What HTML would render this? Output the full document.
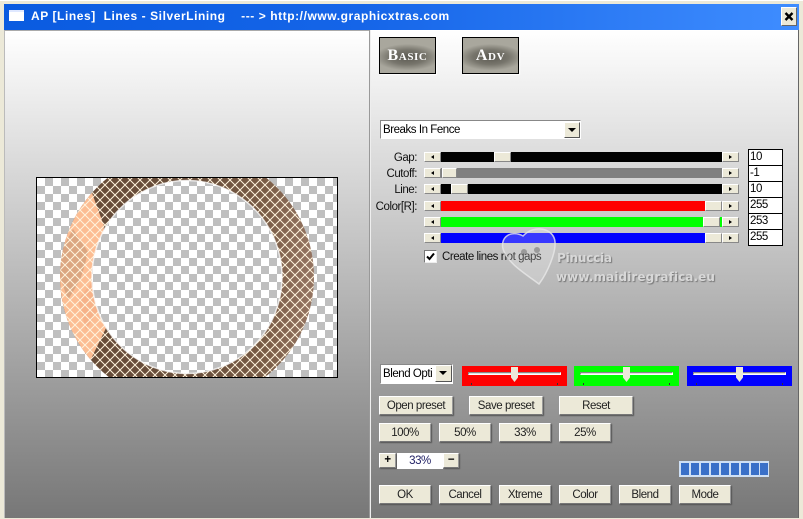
<!DOCTYPE html>
<html><head><meta charset="utf-8">
<style>
html,body{margin:0;padding:0;width:803px;height:519px;overflow:hidden;background:#ece9d8}
body{position:relative;font:11.5px "Liberation Sans",sans-serif;letter-spacing:-.45px;color:#000}
.a{position:absolute;box-sizing:border-box}
.panel{background:linear-gradient(#fff 0,#777 100%);top:30px;height:488px}
.btn{position:absolute;box-sizing:border-box;background:#ece9d8;border:1px solid;border-color:#fff #999 #777 #fff;box-shadow:1px 1px 1px #555;text-align:center;font-size:11.5px;line-height:19px;height:19px;color:#222}
.lab{position:absolute;right:386px;font-size:11.5px;line-height:13px;white-space:pre;color:#111}
.ar{position:absolute;box-sizing:border-box;width:17px;height:10px;background:#ece9d8;border:1px solid;border-color:#fff #888 #888 #fff}
.ar i{position:absolute;left:6px;top:2px;width:0;height:0;border:2px solid transparent}
.ar.l i{border-right:3px solid #000;border-left:0}
.ar.r i{border-left:3px solid #000;border-right:0}
.tr{position:absolute;height:10px;left:441px;width:281px}
.th{position:absolute;width:17px;height:10px;box-sizing:border-box;background:#ece9d8;border:1px solid;border-color:#fff #888 #888 #fff}
.val{position:absolute;left:748px;width:35px;height:17px;box-sizing:border-box;background:#fff;border:1px solid #000;font-size:11.5px;line-height:14px;padding-left:1px}
.big{position:absolute;box-sizing:border-box;top:37px;width:57px;height:37px;border:1px solid #000;background:radial-gradient(ellipse 60% 38% at 50% 55%,#5c5a52 0,#77756c 55%,#a9a79d 100%);color:#fff;font:bold 16px "Liberation Serif",serif;font-variant:small-caps;text-align:center;line-height:35px;letter-spacing:.6px;box-shadow:1px 1px 1px #fff}
.sl{position:absolute;top:366px;height:20px;width:105px}
.sl b{position:absolute;left:6px;right:6px;top:6px;background:#ddd;border:1px solid;border-color:#888 #fff #fff #888;box-sizing:content-box;height:1px}
.sl u{position:absolute;top:1px;width:7px;height:15px;background:#ece9d8;clip-path:polygon(0 0,100% 0,100% 70%,50% 100%,0 70%)}
.sl s{position:absolute;top:17px;width:1px;height:2px;background:#333}
.seg{position:absolute;top:463px;width:8px;height:12px;background:#3a70c8}
</style></head><body>

<div class="a" style="left:0;top:0;width:803px;height:519px;background:#ece9d8;border-top:1px solid #fff"></div>
<div class="a" style="left:4px;top:4px;width:795px;height:26px;background:linear-gradient(90deg,#0a5be0 0,#1565e8 45%,#3f8dff 100%)"></div>
<div class="a" style="left:9px;top:10px;width:15px;height:11px;background:#fff;border-top:2px solid #dfe8ff"></div>
<div class="a" style="left:31px;top:8px;font-weight:bold;font-size:12px;line-height:16px;color:#fff;white-space:pre;letter-spacing:.565px">AP [Lines]  Lines - SilverLining    --- &gt; http://www.graphicxtras.com</div>
<div class="a" style="left:781px;top:7px;width:16px;height:19px;background:#ece9d8;border:1px solid;border-color:#fff #666 #666 #fff"><svg width="14" height="17" style="display:block"><path d="M3.5 5L10.5 12M10.5 5L3.5 12" stroke="#000" stroke-width="2.4"/></svg></div>

<div class="a panel" style="left:4px;width:365px;border-top:1px solid #aaa;border-left:1px solid #bbb"></div>
<div class="a" style="left:369px;top:30px;width:1px;height:488px;background:#999"></div>
<div class="a" style="left:370px;top:30px;width:1px;height:488px;background:#eee"></div>
<div class="a panel" style="left:371px;width:427px"></div>
<div class="a" style="left:798px;top:30px;width:1px;height:488px;background:#666"></div>

<svg class="a" style="left:36px;top:177px" width="302" height="201" viewBox="36 177 302 201">
<defs>
<pattern id="ck" x="37" y="178" width="16" height="16" patternUnits="userSpaceOnUse">
<rect width="16" height="16" fill="#fff"/><rect x="8" width="8" height="8" fill="#bfbfbf"/><rect y="8" width="8" height="8" fill="#bfbfbf"/>
</pattern>
<pattern id="lt" x="0" y="0" width="10" height="10" patternUnits="userSpaceOnUse">
<path d="M0 0L10 10M10 0L0 10" stroke="#fff3dc" stroke-width="1" fill="none"/>
</pattern>
<linearGradient id="br" x1="60" y1="0" x2="314" y2="0" gradientUnits="userSpaceOnUse">
<stop offset="0" stop-color="#654a37"/><stop offset=".55" stop-color="#6a4f3c"/><stop offset=".8" stop-color="#785b45"/><stop offset="1" stop-color="#957562"/>
</linearGradient>
<clipPath id="ring"><path clip-rule="evenodd" d="M60 277a127 127 0 1 0 254 0a127 127 0 1 0 -254 0ZM92 277a95 96.5 0 1 1 190 0a95 96.5 0 1 1 -190 0Z"/></clipPath>
<clipPath id="img"><rect x="37" y="178" width="300" height="199"/></clipPath>
</defs>
<rect x="36.5" y="177.5" width="301" height="200" fill="url(#ck)" stroke="#000"/>
<g clip-path="url(#img)">
<g clip-path="url(#ring)">
<rect x="50" y="140" width="280" height="270" fill="url(#br)"/>
<polygon points="40,175 92,193 104,226 100,277 106,328 91,359 40,380" fill="#fcbd93"/>
<polygon points="55,262 73,229 88,252 84,268 80,280 68,300" fill="#c99a78" opacity=".65"/>
<polygon points="78,300 92,282 98,310 86,330" fill="#f0a880" opacity=".5"/>
<rect x="50" y="140" width="280" height="270" fill="url(#lt)"/>
</g>
<path d="M92 277a95 96.5 0 1 1 190 0a95 96.5 0 1 1 -190 0Z" fill="none" stroke="#fff" stroke-width="1.5" opacity=".75"/>
</g>
</svg>

<div class="big" style="left:379px">Basic</div>
<div class="big" style="left:462px">Adv</div>

<!-- dropdown -->
<div class="a" style="left:380px;top:120px;width:201px;height:19px;background:#fff;border:1px solid;border-color:#888 #fff #fff #888;line-height:19px;padding-left:2px">Breaks In Fence</div>
<div class="a" style="left:564px;top:122px;width:16px;height:16px;background:#ece9d8;border:1px solid;border-color:#fff #555 #555 #fff"><i style="position:absolute;left:3px;top:5px;border:4px solid transparent;border-top:4px solid #000;border-bottom:0"></i></div>

<!-- sliders -->
<div class="lab" style="top:152px">Gap:</div>
<div class="lab" style="top:168px">Cutoff:</div>
<div class="lab" style="top:184px">Line:</div>
<div class="lab" style="top:201px">Color[R]:</div>

<div class="ar l" style="left:424px;top:152px"><i></i></div><div class="tr" style="top:152px;background:#000"></div><div class="th" style="left:494px;top:152px"></div><div class="ar r" style="left:722px;top:152px"><i></i></div>
<div class="ar l" style="left:424px;top:168px"><i></i></div><div class="tr" style="top:168px;background:#808080"></div><div class="th" style="left:442px;top:168px;width:15px"></div><div class="ar r" style="left:722px;top:168px"><i></i></div>
<div class="ar l" style="left:424px;top:184px"><i></i></div><div class="tr" style="top:184px;background:#000"></div><div class="th" style="left:451px;top:184px"></div><div class="ar r" style="left:722px;top:184px"><i></i></div>
<div class="ar l" style="left:424px;top:201px"><i></i></div><div class="tr" style="top:201px;background:#f00"></div><div class="th" style="left:705px;top:201px"></div><div class="ar r" style="left:722px;top:201px"><i></i></div>
<div class="ar l" style="left:424px;top:217px"><i></i></div><div class="tr" style="top:217px;background:#0f0"></div><div class="th" style="left:703px;top:217px"></div><div class="ar r" style="left:722px;top:217px"><i></i></div>
<div class="ar l" style="left:424px;top:233px"><i></i></div><div class="tr" style="top:233px;background:#00f"></div><div class="th" style="left:705px;top:233px"></div><div class="ar r" style="left:722px;top:233px"><i></i></div>

<div class="val" style="top:149px">10</div>
<div class="val" style="top:165px">-1</div>
<div class="val" style="top:181px">10</div>
<div class="val" style="top:197px">255</div>
<div class="val" style="top:213px">253</div>
<div class="val" style="top:229px">255</div>

<div class="a" style="left:424px;top:250px;width:13px;height:13px;background:#fff;border:1px solid;border-color:#777 #eee #eee #777"><svg width="11" height="11" style="display:block"><path d="M2 5.5L4.5 8L9 2.5" fill="none" stroke="#000" stroke-width="2"/></svg></div>
<div class="a" style="left:442px;top:250px;line-height:15px;white-space:pre;color:#111">Create lines not gaps</div>

<!-- watermark -->
<svg class="a" style="left:498px;top:222px" width="62" height="66" viewBox="0 0 62 66">
<path d="M5 27C2 14 14 8 25 14C36 2 56 6 57 20C58 30 50 50 41 62C28 52 10 42 5 27Z" fill="#fff" fill-opacity=".22" stroke="#e8e8e8" stroke-opacity=".8" stroke-width="1.5"/>
<circle cx="26" cy="30" r="3" fill="#666" opacity=".5"/><circle cx="39" cy="28" r="3" fill="#666" opacity=".5"/>
</svg>
<div class="a" style="left:557px;top:251px;font:bold 12px/15px 'DejaVu Sans',sans-serif;letter-spacing:-.2px;color:#d8d8d8;text-shadow:1px 1px 1px #777;white-space:pre">Pinuccia</div>
<div class="a" style="left:556px;top:270px;font:bold 12px/15px 'DejaVu Sans',sans-serif;letter-spacing:.1px;color:#d8d8d8;text-shadow:1px 1px 1px #777;white-space:pre">www.maidiregrafica.eu</div>

<!-- blend -->
<div class="a" style="left:380px;top:364px;width:73px;height:20px;background:#fff;border:1px solid;border-color:#888 #fff #fff #888;line-height:19px;padding-left:2px;overflow:hidden;white-space:nowrap">Blend Opti</div>
<div class="a" style="left:435px;top:365px;width:17px;height:17px;background:#ece9d8;border:1px solid;border-color:#fff #555 #555 #fff"><i style="position:absolute;left:3px;top:5px;border:4px solid transparent;border-top:4px solid #000;border-bottom:0"></i></div>

<div class="sl" style="left:462px;background:#f00"><b></b><u style="left:49px"></u><s style="left:9px"></s><s style="left:95px"></s></div>
<div class="sl" style="left:574px;background:#0f0"><b></b><u style="left:49px"></u><s style="left:9px"></s><s style="left:95px"></s></div>
<div class="sl" style="left:687px;background:#00f"><b></b><u style="left:49px"></u><s style="left:9px"></s><s style="left:95px"></s></div>

<div class="btn" style="left:379px;top:396px;width:74px">Open preset</div>
<div class="btn" style="left:469px;top:396px;width:74px">Save preset</div>
<div class="btn" style="left:559px;top:396px;width:74px">Reset</div>

<div class="btn" style="left:379px;top:423px;width:52px">100%</div>
<div class="btn" style="left:439px;top:423px;width:52px">50%</div>
<div class="btn" style="left:499px;top:423px;width:52px">33%</div>
<div class="btn" style="left:559px;top:423px;width:52px">25%</div>

<div class="btn" style="left:379px;top:453px;width:17px;height:15px;line-height:12px;font-weight:bold;color:#000">+</div>
<div class="a" style="left:397px;top:453px;width:46px;height:16px;background:#fff;text-align:center;line-height:16px;color:#226">33%</div>
<div class="btn" style="left:443px;top:453px;width:16px;height:15px;line-height:12px;font-weight:bold;color:#000">−</div>

<div class="a" style="left:679px;top:461px;width:90px;height:16px;background:#cfe0f5"></div>
<div class="seg" style="left:681px"></div><div class="seg" style="left:691px"></div><div class="seg" style="left:701px"></div><div class="seg" style="left:711px"></div><div class="seg" style="left:721px"></div><div class="seg" style="left:731px"></div><div class="seg" style="left:741px"></div><div class="seg" style="left:751px"></div><div class="seg" style="left:760px"></div>

<div class="btn" style="left:379px;top:485px;width:52px">OK</div>
<div class="btn" style="left:439px;top:485px;width:52px">Cancel</div>
<div class="btn" style="left:499px;top:485px;width:52px">Xtreme</div>
<div class="btn" style="left:559px;top:485px;width:52px">Color</div>
<div class="btn" style="left:619px;top:485px;width:52px">Blend</div>
<div class="btn" style="left:679px;top:485px;width:52px">Mode</div>

</body></html>
